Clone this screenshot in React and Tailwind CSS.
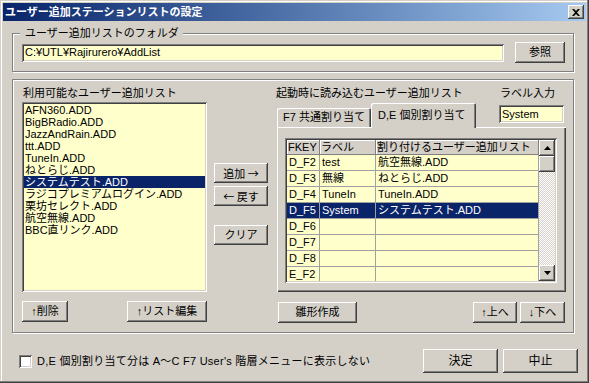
const raised =
  "shadow-[inset_-1px_-1px_0_#404040,inset_1px_1px_0_#fff,inset_-2px_-2px_0_#808080,inset_2px_2px_0_#d4d0c8]";
const sunken =
  "shadow-[inset_1px_1px_0_#808080,inset_-1px_-1px_0_#fff,inset_2px_2px_0_#404040,inset_-2px_-2px_0_#d4d0c8]";
const etched = "border border-[#808080] shadow-[inset_1px_1px_0_#fff,1px_1px_0_#fff]";
const cjk = "font-['Noto_Sans_CJK_JP',sans-serif]";

const available = [
  "AFN360.ADD",
  "BigBRadio.ADD",
  "JazzAndRain.ADD",
  "ttt.ADD",
  "TuneIn.ADD",
  "ねとらじ.ADD",
  "システムテスト.ADD",
  "ラジコプレミアムログイン.ADD",
  "栗坊セレクト.ADD",
  "航空無線.ADD",
  "BBC直リンク.ADD",
];

const assigned = [
  ["D_F2", "test", "航空無線.ADD"],
  ["D_F3", "無線", "ねとらじ.ADD"],
  ["D_F4", "TuneIn", "TuneIn.ADD"],
  ["D_F5", "System", "システムテスト.ADD"],
  ["D_F6", "", ""],
  ["D_F7", "", ""],
  ["D_F8", "", ""],
  ["E_F2", "", ""],
];

function Btn({ className = "", children }) {
  return (
    <button
      type="button"
      className={`flex items-center justify-center bg-[#d4d0c8] ${raised} ${className}`}
    >
      {children}
    </button>
  );
}

function Arrow({ down }) {
  return (
    <svg width="7" height="4" viewBox="0 0 7 4">
      <polygon points={down ? "0,0 7,0 3.5,4" : "3.5,0 7,4 0,4"} fill="#000" />
    </svg>
  );
}

function ScrollBar() {
  return (
    <div className="w-[16px] flex flex-col">
      <Btn className="h-[16px] w-[16px]">
        <Arrow />
      </Btn>
      <div className={`h-[16px] w-[16px] bg-[#d4d0c8] ${raised}`} />
      <div className="flex-1 bg-[image:repeating-conic-gradient(#fff_0_25%,#d4d0c8_0_50%)] bg-[length:2px_2px]" />
      <Btn className="h-[16px] w-[16px]">
        <Arrow down />
      </Btn>
    </div>
  );
}

export default function App() {
  return (
    <div className="w-[589px] h-[383px] overflow-hidden bg-[#d4d0c8] p-[3px] flex flex-col text-[11px] leading-[13px] text-black font-['Liberation_Sans','Noto_Sans_CJK_JP',sans-serif] shadow-[inset_-1px_-1px_0_#404040,inset_-2px_-2px_0_#808080,inset_1px_1px_0_#d4d0c8,inset_2px_2px_0_#fff]">
      {/* title bar */}
      <div className="h-[18px] flex items-center justify-between pl-[2px] pr-[2px] bg-linear-to-r from-[#0a246a] to-[#a6caf0]">
        <span className="text-white font-bold">ユーザー追加ステーションリストの設定</span>
        <Btn className="w-[16px] h-[14px]">
          <svg width="8" height="7" viewBox="0 0 8 7">
            <path d="M0 0h2l2 2 2-2h2L5 3.5 8 7H6L4 5 2 7H0l3-3.5z" fill="#000" />
          </svg>
        </Btn>
      </div>

      {/* folder group */}
      <div className={`ml-[9px] mt-[12px] w-[562px] pl-[9px] pb-[8px] ${etched}`}>
        <div className="-mt-[7px] -ml-[2px] w-fit bg-[#d4d0c8] pl-[5px] pr-[4px]">
          ユーザー追加リストのフォルダ
        </div>
        <div className="mt-[2px] flex items-center">
          <div className={`w-[482px] h-[18px] bg-[#ffffcc] pl-[3px] flex items-center ${sunken}`}>
            C:¥UTL¥Rajirurero¥AddList
          </div>
          <Btn className="ml-[11px] w-[50px] h-[21px]">参照</Btn>
        </div>
      </div>

      {/* list group */}
      <div className={`ml-[9px] mt-[7px] w-[562px] h-[254px] pl-[9px] pt-[7px] flex ${etched}`}>
        {/* available lists */}
        <div className="w-[185px] flex flex-col">
          <div className="pl-[1px]">利用可能なユーザー追加リスト</div>
          <div className={`mt-[2px] h-[190px] bg-[#ffffcc] p-[2px] ${sunken}`}>
            {available.map((name) => (
              <div
                key={name}
                className={`h-[12px] leading-[12px] pl-[1px] whitespace-nowrap ${
                  name === "システムテスト.ADD" ? "bg-[#0a246a] text-white" : ""
                }`}
              >
                {name}
              </div>
            ))}
          </div>
          <div className="mt-[9px] flex justify-between">
            <Btn className="w-[46px] h-[21px]">↑削除</Btn>
            <Btn className="w-[80px] h-[21px]">↑リスト編集</Btn>
          </div>
        </div>

        {/* move buttons */}
        <div className="ml-[7px] w-[54px] flex flex-col">
          <Btn className={`mt-[76px] h-[20px] ${cjk}`}>追加 →</Btn>
          <Btn className={`mt-[3px] h-[20px] ${cjk}`}>← 戻す</Btn>
          <Btn className="mt-[19px] h-[20px]">クリア</Btn>
        </div>

        {/* startup lists */}
        <div className="ml-[9px] w-[289px] flex flex-col">
          <div className="flex justify-between">
            <div className="flex flex-col">
              <div className="-ml-[1px]">起動時に読み込むユーザー追加リスト</div>
              <div className="mt-[3px] flex items-end">
                <div className="w-[94px] h-[19px] pl-[6px] pt-[3px] bg-[#d4d0c8] rounded-t-[2px] shadow-[inset_1px_1px_0_#fff,inset_-1px_0_0_#404040,inset_-2px_0_0_#808080]">
                  F7 共通割り当て
                </div>
                <div className="relative z-10 -mb-[1px] w-[105px] h-[25px] pl-[7px] pt-[6px] bg-[#d4d0c8] rounded-t-[2px] shadow-[inset_1px_1px_0_#fff,inset_-1px_0_0_#404040,inset_-2px_0_0_#808080]">
                  D,E 個別割り当て
                </div>
              </div>
            </div>
            <div className="mr-[2px] w-[65px] flex flex-col">
              <div className="pl-[1px]">ラベル入力</div>
              <div className={`mt-[5px] h-[18px] bg-[#ffffcc] pl-[3px] flex items-center ${sunken}`}>
                System
              </div>
            </div>
          </div>

          <div className="h-[165px] pl-[8px] pt-[11px] bg-[#d4d0c8] shadow-[inset_1px_1px_0_#fff,inset_-1px_-1px_0_#404040,inset_-2px_-2px_0_#808080]">
            <div className={`w-[272px] h-[145px] p-[2px] flex bg-[#d4d0c8] ${sunken}`}>
              <div className="w-[252px] overflow-hidden">
                <div className="flex h-[15px]">
                  {[
                    ["FKEY", "w-[33px]"],
                    ["ラベル", "w-[56px]"],
                    ["割り付けるユーザー追加リスト", "w-[163px]"],
                  ].map(([t, w]) => (
                    <div
                      key={t}
                      className={`${w} pl-[1px] leading-[15px] whitespace-nowrap border-r border-b border-[#808080] shadow-[inset_1px_1px_0_#fff]`}
                    >
                      {t}
                    </div>
                  ))}
                </div>
                {assigned.map(([key, label, list]) => {
                  const sel = key === "D_F5";
                  const cell = `h-[16px] leading-[15px] pl-[2px] whitespace-nowrap border-r border-b border-[#a0a0a0] ${
                    sel ? "bg-[#0a246a] text-white" : "bg-[#ffffcc]"
                  }`;
                  return (
                    <div key={key} className="flex">
                      <div className={`w-[33px] ${cell}`}>{key}</div>
                      <div className={`w-[56px] ${cell}`}>{label}</div>
                      <div className={`w-[163px] ${cell}`}>{list}</div>
                    </div>
                  );
                })}
              </div>
              <ScrollBar />
            </div>
          </div>

          <div className="mt-[10px] flex">
            <Btn className="ml-[1px] w-[79px] h-[21px]">雛形作成</Btn>
            <div className="flex-1" />
            <Btn className="w-[44px] h-[21px]">↑上へ</Btn>
            <Btn className="ml-[3px] mr-[1px] w-[45px] h-[21px]">↓下へ</Btn>
          </div>
        </div>
      </div>

      {/* bottom row */}
      <div className="mt-[16px] h-[24px] flex items-center">
        <div className={`ml-[16px] w-[13px] h-[13px] bg-white ${sunken}`} />
        <div className="ml-[5px] whitespace-nowrap tracking-[0.25px]">
          D,E 個別割り当て分は A～C F7 User's 階層メニューに表示しない
        </div>
        <div className="flex-1" />
        <Btn className="w-[75px] h-[24px] text-[12px]">決定</Btn>
        <Btn className="ml-[5px] mr-[8px] w-[75px] h-[24px] text-[12px]">中止</Btn>
      </div>
    </div>
  );
}
